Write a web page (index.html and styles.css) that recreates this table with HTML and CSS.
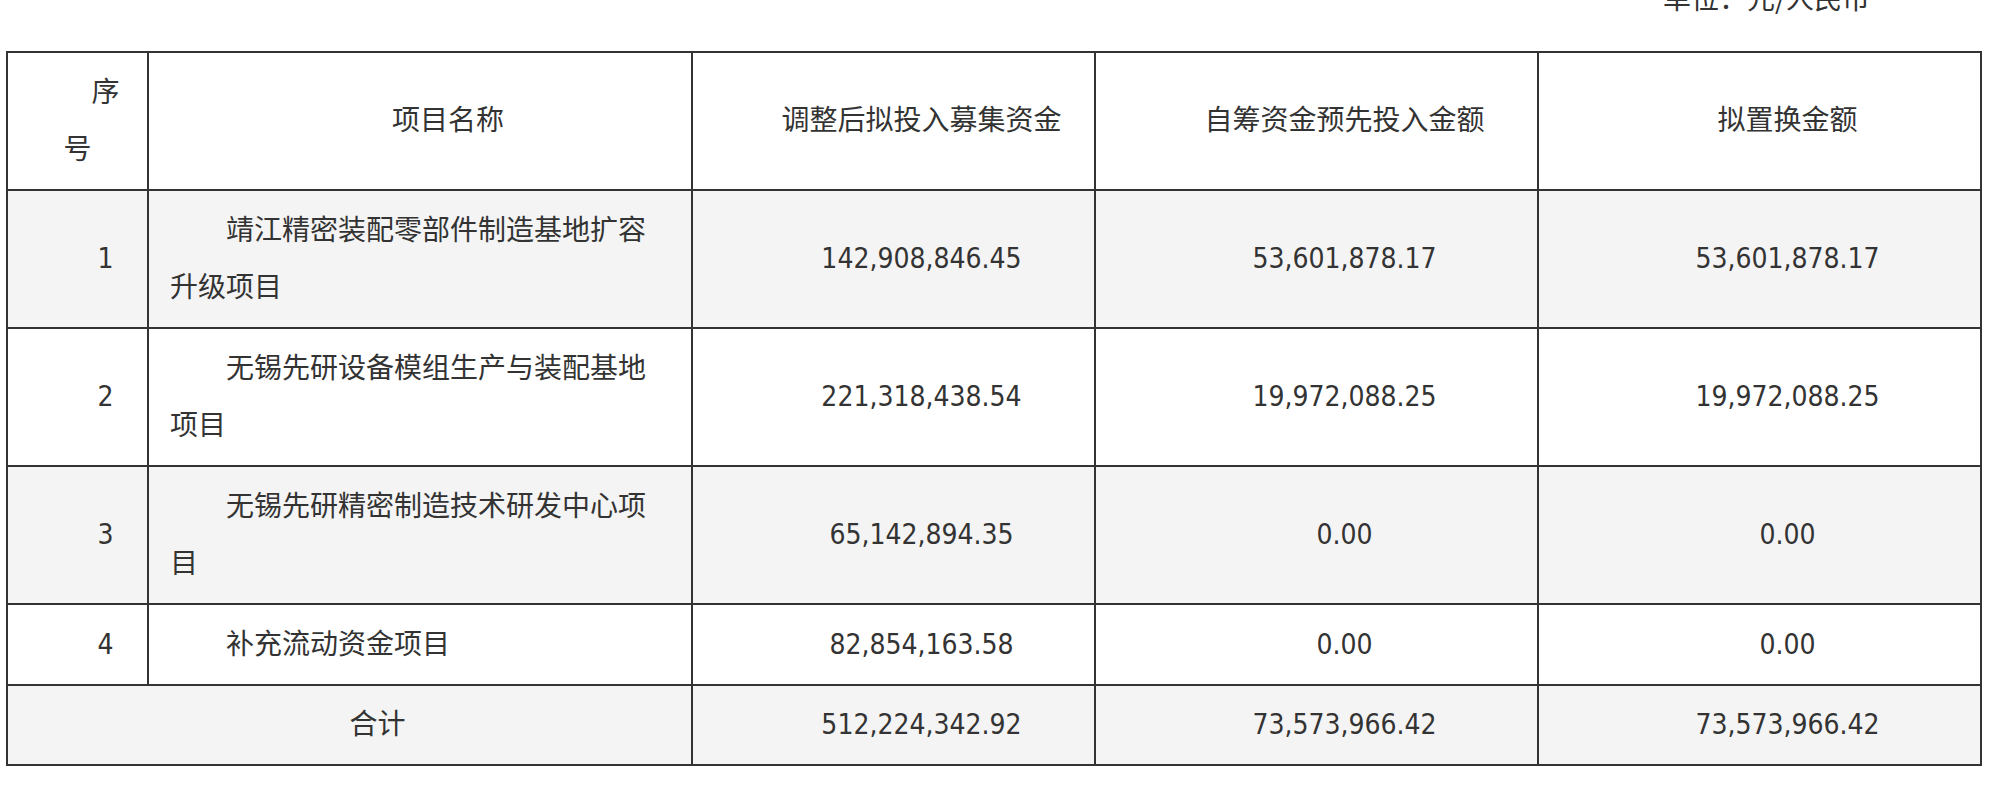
FILE: index.html
```html
<!DOCTYPE html>
<html lang="zh-CN">
<head>
<meta charset="utf-8">
<title>募集资金置换</title>
<link rel="stylesheet" href="styles.css">
</head>
<body>
<div class="page">
  <p class="unit">单位：元/人民币</p>
  <table class="fund-table">
    <colgroup>
      <col class="c-idx">
      <col class="c-name">
      <col class="c-adj">
      <col class="c-self">
      <col class="c-swap">
    </colgroup>
    <thead>
      <tr>
        <th class="idx">序号</th>
        <th>项目名称</th>
        <th>调整后拟投入募集资金</th>
        <th>自筹资金预先投入金额</th>
        <th>拟置换金额</th>
      </tr>
    </thead>
    <tbody>
      <tr class="shade">
        <td class="idx">1</td>
        <td class="name">靖江精密装配零部件制造基地扩容升级项目</td>
        <td>142,908,846.45</td>
        <td>53,601,878.17</td>
        <td>53,601,878.17</td>
      </tr>
      <tr>
        <td class="idx">2</td>
        <td class="name">无锡先研设备模组生产与装配基地项目</td>
        <td>221,318,438.54</td>
        <td>19,972,088.25</td>
        <td>19,972,088.25</td>
      </tr>
      <tr class="shade">
        <td class="idx">3</td>
        <td class="name">无锡先研精密制造技术研发中心项目</td>
        <td>65,142,894.35</td>
        <td>0.00</td>
        <td>0.00</td>
      </tr>
      <tr>
        <td class="idx">4</td>
        <td class="name">补充流动资金项目</td>
        <td>82,854,163.58</td>
        <td>0.00</td>
        <td>0.00</td>
      </tr>
      <tr class="shade">
        <td colspan="2">合计</td>
        <td>512,224,342.92</td>
        <td>73,573,966.42</td>
        <td>73,573,966.42</td>
      </tr>
    </tbody>
  </table>
</div>
</body>
</html>
```
FILE: styles.css
```css
html, body {
  margin: 0;
  padding: 0;
  background: #ffffff;
}

.page {
  padding: 0 0 0 6px;
  font-family: "DejaVu Sans Condensed", "DejaVu Sans", "Noto Sans CJK SC", sans-serif;
  font-stretch: condensed;
  font-size: 28px;
  color: #333333;
  overflow: hidden;
}

.unit {
  margin: -31px 0 0 0;
  line-height: 57px;
  text-align: right;
  padding-right: 126px;
  font-family: "Noto Sans CJK SC", sans-serif;
}

.fund-table {
  margin-top: 25px;
  border-collapse: collapse;
  table-layout: fixed;
  width: 1976px;
}

.c-idx { width: 141px; }
.c-name { width: 544px; }
.c-adj { width: 403px; }
.c-self { width: 443px; }
.c-swap { width: 443px; }

.fund-table th,
.fund-table td {
  border: 2px solid #333333;
  padding: 10.5px 20px;
  line-height: 57.5px;
  text-align: center;
  text-indent: 2em;
  font-weight: normal;
  vertical-align: middle;
}

.fund-table td.name {
  text-align: left;
  padding-left: 21px;
  padding-right: 21px;
}

.fund-table tr.shade td {
  background: #f4f4f4;
}
```
